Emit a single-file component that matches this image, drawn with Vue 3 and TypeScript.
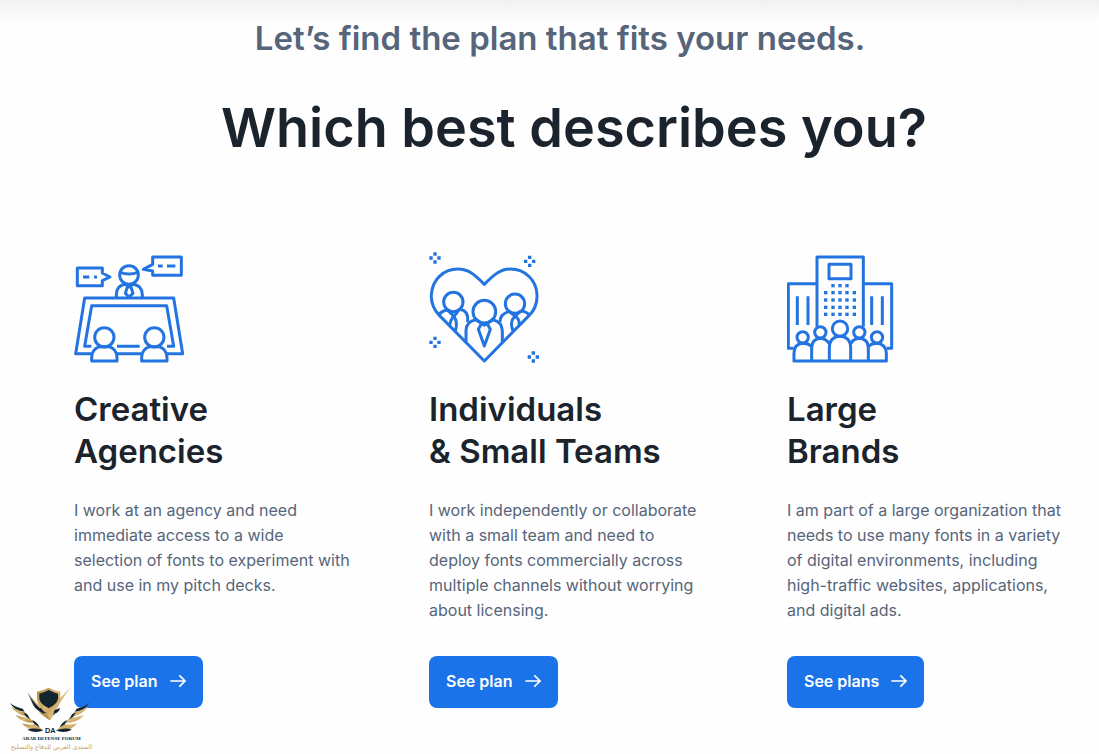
<script setup lang="ts">
interface Plan {
  id: string
  title: string
  text: string
  action: string
}

const plans: Plan[] = [
  {
    id: 'agencies',
    title: 'Creative\nAgencies',
    text: 'I work at an agency and need\nimmediate access to a wide\nselection of fonts to experiment with\nand use in my pitch decks.',
    action: 'See plan',
  },
  {
    id: 'teams',
    title: 'Individuals\n& Small Teams',
    text: 'I work independently or collaborate\nwith a small team and need to\ndeploy fonts commercially across\nmultiple channels without worrying\nabout licensing.',
    action: 'See plan',
  },
  {
    id: 'brands',
    title: 'Large\nBrands',
    text: 'I am part of a large organization that\nneeds to use many fonts in a variety\nof digital environments, including\nhigh-traffic websites, applications,\nand digital ads.',
    action: 'See plans',
  },
]

const sparkles = [[45, 39], [329, 49], [45, 292], [340, 336]]
const windowRows = [
  { y: 122, xs: [165, 186, 207] },
  { y: 143, xs: [143, 165, 186, 207, 229] },
  { y: 165, xs: [143, 165, 186, 207, 229] },
  { y: 187, xs: [143, 165, 186, 207, 229] },
  { y: 208, xs: [143, 165, 186, 207, 229] },
]
</script>

<template>
  <main class="page">
    <header class="intro">
      <p class="lead">Let’s find the plan that fits your needs.</p>
      <h1>Which best describes you?</h1>
    </header>

    <section class="plans" aria-label="Plans">
      <article v-for="plan in plans" :key="plan.id" class="plan">
        <svg v-if="plan.id === 'agencies'" class="art" viewBox="30 21 330 342" aria-hidden="true">
          <path d="M40 69H115V84L138 96L115 107V122H40Z" />
          <path d="M57 96H76M90 96H99" />
          <path d="M266 36H352V91H266V78L238 73L266 58Z" />
          <path d="M282 63H296M309 63H334" />
          <circle cx="195" cy="90" r="28" />
          <path d="M168 82Q195 92 222 82" />
          <path d="M157 158V150Q157 121 184 118L195 126L207 118Q235 121 235 150V158" />
          <path d="M190 126L184 145L195 156L207 145L201 126" />
          <path d="M82 326H35L62 159H329L356 326H309M159 326H231" />
          <path d="M82 304H62L83 182H308L329 304H309M159 304H227" />
          <circle cx="121" cy="277" r="29" />
          <circle cx="271" cy="277" r="29" />
          <path d="M83 348V337Q84 311 108 305H134Q158 311 159 337V348Z" />
          <path d="M233 348V337Q234 311 258 305H284Q308 311 309 337V348Z" />
        </svg>

        <svg v-else-if="plan.id === 'teams'" class="art" viewBox="27 21 330 342" aria-hidden="true">
          <path d="M193 348L58 211C38 190 33 173 34 150C36 105 70 72 113 72C145 72 164 88 193 118C222 88 241 72 272 72C315 72 350 106 351 150C352 174 345 194 327 212Z" />
          <circle cx="100" cy="171" r="29" />
          <circle cx="285" cy="176" r="29" />
          <circle cx="193" cy="200" r="34" />
          <path d="M57 209Q65 198 82 195L103 215Q114 235 106 257" />
          <path d="M120 193Q145 198 143 226V231M117 193Q112 206 99 216Q90 228 89 241" />
          <path d="M138 292V256Q139 229 168 224L193 241L219 224Q246 230 247 258V294" />
          <path d="M184 237L175 253L193 303L211 253L202 237" />
          <path d="M240 231Q240 207 267 199L292 219Q299 227 297 240" />
          <path d="M303 198Q319 199 329 211M301 198L278 222Q270 240 280 258" />
          <g v-for="[x, y] in sparkles" :key="`${x}-${y}`" class="dots">
            <path :d="`M${x - 5} ${y - 17}h10v10h-10zM${x - 5} ${y + 7}h10v10h-10zM${x - 17} ${y - 5}h10v10h-10zM${x + 7} ${y - 5}h10v10h-10z`" />
          </g>
        </svg>

        <svg v-else class="art" viewBox="27 21 330 342" aria-hidden="true">
          <path d="M117 245V36H256V245" />
          <path d="M117 116H31V310H47M256 116H341V310H326" />
          <path d="M153 58H219V101H153Z" />
          <path d="M58 154V240M90 154V240M281 154V240M313 154V240" />
          <circle cx="186" cy="251" r="23" />
          <circle cx="127" cy="262" r="17" />
          <circle cx="244" cy="262" r="17" />
          <circle cx="74" cy="277" r="17" />
          <circle cx="297" cy="277" r="17" />
          <path d="M154 348V309Q154 276 186 274Q218 276 218 309V348" />
          <path d="M101 348V308Q102 282 127 280Q144 281 154 296M218 296Q227 281 244 280Q270 282 271 308V348" />
          <path d="M101 304Q91 295 74 295Q48 298 48 323V348H325V323Q323 298 297 295Q281 295 271 304" />
          <g class="dots">
            <template v-for="row in windowRows" :key="row.y">
              <rect v-for="x in row.xs" :key="x" :x="x - 5" :y="row.y - 5" width="10" height="10" />
            </template>
          </g>
        </svg>

        <h2>{{ plan.title }}</h2>
        <p class="text">{{ plan.text }}</p>
        <a class="button" href="#">
          <span>{{ plan.action }}</span>
          <svg class="arrow" viewBox="0 0 48 42" aria-hidden="true">
            <path d="M1 21H45M28 4L45 21L28 38" />
          </svg>
        </a>
      </article>
    </section>

    <svg class="badge" viewBox="0 0 330 222" role="img" aria-label="Arab Defense Forum">
      <defs>
        <linearGradient id="gold" x1="0" y1="0" x2="1" y2="1">
          <stop offset="0" stop-color="#b18a45" />
          <stop offset="0.5" stop-color="#d9b774" />
          <stop offset="1" stop-color="#a57c38" />
        </linearGradient>
      </defs>
      <g fill="url(#gold)">
        <path d="M111 35Q132 31 146 23Q160 31 181 35V57Q180 76 164 91L148 121L131 91Q113 77 111 57Z" />
        <path d="M213 21Q181 61 151 121L141 102Q166 75 184 51Z" />
        <path d="M82 36Q106 68 133 90L149 121L121 101Z" />
        <path d="M34 80Q53 91 78 98L82 110Q49 103 34 80Z" />
        <path d="M46 105Q69 113 91 115L102 129Q66 129 46 105Z" />
        <path d="M66 130Q89 137 107 132L129 151Q85 156 66 130Z" />
        <path d="M264 80Q245 91 220 98L216 110Q249 103 264 80Z" />
        <path d="M252 105Q229 113 207 115L196 129Q232 129 252 105Z" />
        <path d="M232 130Q209 137 191 132L169 151Q213 156 232 130Z" />
      </g>
      <g fill="#14252f">
        <path d="M118 41Q134 37 146 30Q159 37 174 41V57Q170 73 146 85Q122 73 118 57Z" />
        <path d="M83 38Q99 69 132 95L143 100Q111 98 100 76Z" />
        <path d="M117 86L123 84L134 101Q121 99 117 86ZM180 84Q178 96 164 101L159 107L163 91Z" />
        <path d="M30 69Q46 82 68 86L74 95Q43 92 30 69Z" />
        <path d="M268 69Q252 82 230 86L224 95Q255 92 268 69Z" />
        <path d="M70 97L82 103L90 117L79 111ZM228 97L216 103L208 117L219 111ZM96 120Q113 127 119 142L103 132ZM202 120Q185 127 179 142L195 132ZM82 149Q103 141 130 151Q108 162 82 149ZM216 149Q195 141 168 151Q190 162 216 149Z" />
      </g>
      <text class="badge-mark" x="151" y="160" text-anchor="middle">DA</text>
      <text class="badge-latin" x="154" y="181" text-anchor="middle">ARAB DEFENSE FORUM</text>
      <text class="badge-arabic" x="154" y="208" text-anchor="middle">المنتدى العربي للدفاع والتسليح</text>
    </svg>
  </main>
</template>

<style>
body {
  margin: 0;
  background: #fefefe;
}
</style>

<style scoped>
.page {
  position: relative;
  box-sizing: border-box;
  min-height: 100vh;
  padding: 16px 33px 46px 74px;
  background: linear-gradient(#f1f1f1, #fefefe 22px);
  color: #1b242c;
  font-family: Inter, "Liberation Sans", sans-serif;
}

.intro {
  text-align: center;
}

.lead {
  margin: 0 20px 0 0;
  color: #56657a;
  font-size: 33px;
  font-weight: 600;
  line-height: 44px;
}

h1 {
  margin: 32px 0 0 8px;
  font-size: 54px;
  font-weight: 600;
  line-height: 72px;
}

.plans {
  display: grid;
  grid-template-columns: 279fr 282fr 279fr;
  column-gap: 76px;
  margin-top: 88px;
}

.plan {
  display: flex;
  flex-direction: column;
  align-items: flex-start;
}

.art {
  width: 110px;
  height: 114px;
  fill: none;
  stroke: #2374e1;
  stroke-linejoin: round;
  stroke-width: 9;
}

.dots {
  fill: #2374e1;
  stroke: none;
}

h2 {
  margin: 22px 0 0;
  font-size: 33px;
  font-weight: 600;
  line-height: 42px;
  white-space: pre-line;
}

.text {
  flex: 1;
  margin: 26px 0 33px;
  color: #56657a;
  font-size: 16px;
  line-height: 25px;
  white-space: pre-line;
}

.button {
  display: flex;
  box-sizing: border-box;
  align-items: center;
  gap: 12px;
  height: 52px;
  padding: 0 17px 2px;
  border-radius: 8px;
  background: #1a73e8;
  color: #fff;
  font-size: 16px;
  font-weight: 600;
  text-decoration: none;
}

.arrow {
  width: 16px;
  height: 14px;
  fill: none;
  stroke: #fff;
  stroke-width: 5;
}

.badge {
  position: absolute;
  bottom: 0;
  left: 0;
  width: 110px;
  height: 74px;
}

.badge-mark {
  fill: #14252f;
  font: bold 22px "Liberation Sans", sans-serif;
}

.badge-latin {
  fill: #14252f;
  font: bold 15px "Liberation Serif", serif;
}

.badge-arabic {
  fill: #c9a15a;
  font: 19px "DejaVu Sans", sans-serif;
}
</style>
